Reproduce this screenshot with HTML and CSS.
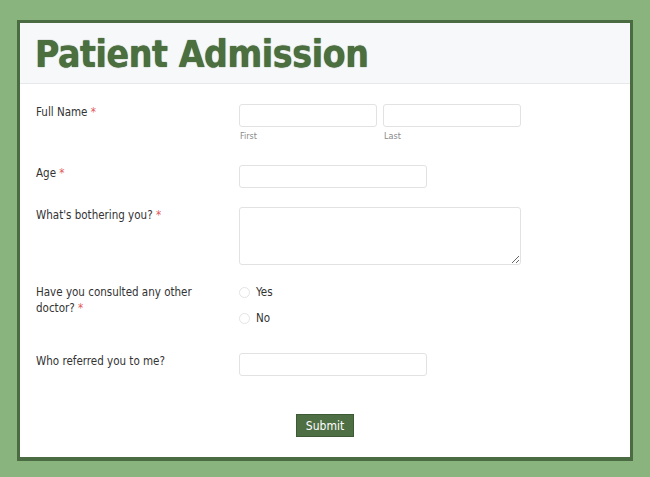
FILE: index.html
```html
<!DOCTYPE html>
<html>
<head>
<meta charset="utf-8">
<link rel="stylesheet" href="styles.css">
</head>
<body>
<div class="card">
  <div class="header"><h1 class="title">Patient Admission</h1></div>
  <form class="form">
    <div class="row row-name">
      <div class="label">Full Name <span class="req">*</span></div>
      <div class="field">
        <div class="name-pair">
          <div class="name-part"><input class="input" type="text"><div class="sub">First</div></div>
          <div class="name-part"><input class="input" type="text"><div class="sub">Last</div></div>
        </div>
      </div>
    </div>
    <div class="row row-age">
      <div class="label">Age <span class="req">*</span></div>
      <div class="field"><input class="input input-mid" type="text"></div>
    </div>
    <div class="row row-text">
      <div class="label">What's bothering you? <span class="req">*</span></div>
      <div class="field"><textarea class="textarea"></textarea></div>
    </div>
    <div class="row row-radio">
      <div class="label">Have you consulted any other<br>doctor? <span class="req">*</span></div>
      <div class="field">
        <label class="radio"><span class="circle"></span>Yes</label>
        <label class="radio"><span class="circle"></span>No</label>
      </div>
    </div>
    <div class="row row-ref">
      <div class="label">Who referred you to me?</div>
      <div class="field"><input class="input input-mid" type="text"></div>
    </div>
    <div class="actions"><button class="submit" type="button">Submit</button></div>
  </form>
</div>
</body>
</html>
```
FILE: styles.css
```css
html, body { margin: 0; padding: 0; }
body {
  background: #89b47e;
  font-family: "DejaVu Sans Condensed", "DejaVu Sans", sans-serif;
  width: 650px;
  height: 477px;
  overflow: hidden;
}
.card {
  margin: 20px 0 0 17px;
  width: 610px;
  height: 434px;
  border: 3px solid #4b6b42;
  box-shadow: 0 1px 0 #4b6b42;
  background: #fff;
}
.header {
  height: 60px;
  background: #f7f8fa;
  border-bottom: 1px solid #e6e8eb;
  padding-left: 15px;
  display: flex;
  align-items: center;
}
.title {
  margin: 0;
  font-family: "DejaVu Sans Condensed", "DejaVu Sans", sans-serif;
  font-weight: bold;
  font-size: 37px;
  color: #4c6f40;
  text-shadow: 0 0 1px #2f4d24;
  letter-spacing: -0.4px;
  line-height: 1;
  padding-top: 3px;
}
.form { padding: 20px 0 0 16px; }
.row {
  display: grid;
  grid-template-columns: 203px 1fr;
}
.label {
  font-size: 11.5px;
  line-height: 16px;
  color: #333;
}
.req { color: #e05a5a; }
.row-name { height: 61px; }
.row-age { height: 42px; }
.row-text { height: 77px; }
.row-radio { height: 69px; }
.row-ref { height: 61px; }
.name-pair { display: flex; gap: 6px; }
.name-part { width: 138px; }
.input {
  display: block;
  box-sizing: border-box;
  width: 138px;
  height: 23px;
  border: 1px solid #e2e2e2;
  border-radius: 3px;
  margin: 0;
  padding: 0 6px;
  background: #fff;
}
.input-mid { width: 188px; }
.sub {
  font-size: 9px;
  color: #8a8a8a;
  margin-top: 4px;
  padding-left: 1px;
}
.textarea {
  display: block;
  box-sizing: border-box;
  width: 282px;
  height: 58px;
  border: 1px solid #e2e2e2;
  border-radius: 3px;
  margin: 0;
  resize: both;
}
.radio {
  display: flex;
  align-items: center;
  height: 16px;
  font-size: 11.5px;
  color: #333;
  margin-bottom: 10px;
}
.circle {
  width: 9px;
  height: 9px;
  border: 1px solid #e4e4e4;
  border-radius: 50%;
  margin-right: 6px;
}
.actions {
  display: flex;
  justify-content: center;
  padding-right: 16px;
}
.submit {
  font-family: "DejaVu Sans Condensed", "DejaVu Sans", sans-serif;
  font-size: 12px;
  color: #fff;
  background: #4e6e44;
  border: 1px solid #3e5a35;
  width: 58px;
  height: 23px;
  padding: 0;
  cursor: pointer;
}
```
